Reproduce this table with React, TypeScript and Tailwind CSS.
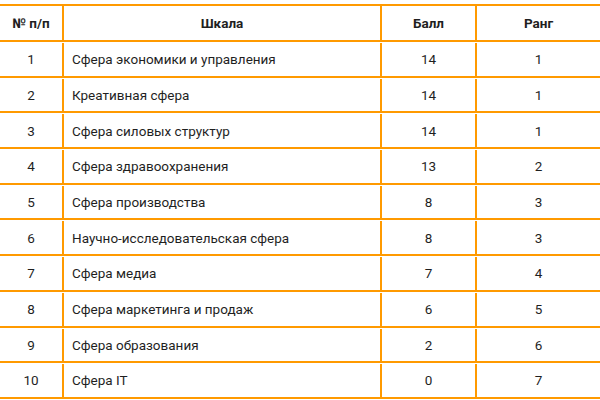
const rows: [string, string, string, string][] = [
  ["1", "Сфера экономики и управления", "14", "1"],
  ["2", "Креативная сфера", "14", "1"],
  ["3", "Сфера силовых структур", "14", "1"],
  ["4", "Сфера здравоохранения", "13", "2"],
  ["5", "Сфера производства", "8", "3"],
  ["6", "Научно-исследовательская сфера", "8", "3"],
  ["7", "Сфера медиа", "7", "4"],
  ["8", "Сфера маркетинга и продаж", "6", "5"],
  ["9", "Сфера образования", "2", "6"],
  ["10", "Сфера IT", "0", "7"],
];

const cols = "grid grid-cols-[62px_318px_95px_125px]";

export default function App() {
  return (
    <div
      className="w-[600px] h-[400px] overflow-hidden bg-white pt-[4px] text-[13.5px] text-[#1f1f1f]"
      style={{ fontFamily: "Roboto, 'Noto Sans', sans-serif" }}
    >
      <div className={`${cols} h-[38px] border-y-2 border-[#ff9a00] font-bold`}>
        <div className="flex items-center justify-center">№ п/п</div>
        <div className="flex items-center justify-center border-l-2 border-[#ff9a00]">Шкала</div>
        <div className="flex items-center justify-center border-l-2 border-[#ff9a00]">Балл</div>
        <div className="flex items-center justify-center border-l-2 border-[#ff9a00]">Ранг</div>
      </div>
      {rows.map(([n, name, score, rank]) => (
        <div key={n} className={`${cols} h-[35.7px] pt-px border-b-2 border-[#ff9a00]`}>
          <div className="flex items-center justify-center">{n}</div>
          <div className="flex items-center pl-2 border-l-2 border-[#ff9a00]">{name}</div>
          <div className="flex items-center justify-center border-l-2 border-[#ff9a00]">{score}</div>
          <div className="flex items-center justify-center border-l-2 border-[#ff9a00]">{rank}</div>
        </div>
      ))}
    </div>
  );
}
